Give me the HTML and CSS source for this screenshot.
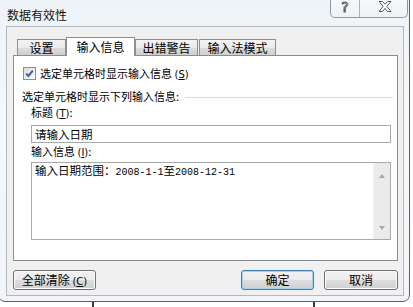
FILE: index.html
```html
<!DOCTYPE html>
<html lang="zh-CN">
<head>
<meta charset="utf-8">
<title>数据有效性</title>
<link rel="stylesheet" href="styles.css">
</head>
<body>
<div class="win">
  <div class="titlebar">
    <span class="title">数据有效性</span>
    <div class="caps">
      <span class="cap help">?</span>
      <span class="cap close">
        <svg width="14" height="11" viewBox="0 0 14 11"><polygon points="1,0.5 4.5,0.5 7,3.2 9.5,0.5 13,0.5 8.8,5.3 13,10.5 9.5,10.5 7,7.4 4.5,10.5 1,10.5 5.2,5.3" fill="#fff" stroke="#5a5a5a" stroke-width="1" stroke-linejoin="round"/></svg>
      </span>
    </div>
  </div>
  <div class="client">
    <div class="tabs">
      <div class="tab t1">设置</div>
      <div class="tab t2 active">输入信息</div>
      <div class="tab t3">出错警告</div>
      <div class="tab t4">输入法模式</div>
    </div>
    <div class="panel">
      <div class="check-row">
        <span class="box"><svg width="11" height="11" viewBox="0 0 11 11"><path d="M2.2 5.6 L4.4 8 L8.8 2.6" fill="none" stroke="#3b5f97" stroke-width="2"/></svg></span>
        <span class="lbl">选定单元格时显示输入信息 <span class="acc">(<u>S</u>)</span></span>
      </div>
      <div class="group-row">
        <span class="lbl">选定单元格时显示下列输入信息:</span>
        <span class="rule"></span>
      </div>
      <div class="field-lbl">标题 <span class="acc">(<u>T</u>)</span>:</div>
      <div class="input">请输入日期</div>
      <div class="field-lbl">输入信息 <span class="acc">(<u>I</u>)</span>:</div>
      <div class="textarea">
        <div class="ta-text">输入日期范围：<span class="mono">2008-1-1</span>至<span class="mono">2008-12-31</span></div>
        <div class="scroll">
          <span class="arrow up"></span>
          <span class="arrow down"></span>
        </div>
      </div>
    </div>
    <div class="buttons">
      <div class="btn clear">全部清除 <span class="acc">(<u>C</u>)</span></div>
      <div class="spacer"></div>
      <div class="btn ok">确定</div>
      <div class="btn cancel">取消</div>
    </div>
  </div>
</div>
<div class="below"></div>
</body>
</html>
```
FILE: styles.css
```css
* { box-sizing: border-box; }
html, body { margin: 0; padding: 0; }
body {
  width: 413px;
  height: 307px;
  overflow: hidden;
  background: #fff;
  display: flex;
  flex-direction: column;
  font-family: "Noto Sans CJK SC", "Noto Sans", sans-serif;
  color: #000;
}
.win {
  flex: none;
  width: 412px;
  height: 304px;
  margin: -2px 0 0 -2px;
  border: 1px solid #5a6068;
  border-radius: 0 0 7px 7px;
  background: linear-gradient(180deg, #eef3f8 0%, #f6f9fb 40%, #f1f5f9 100%);
  display: flex;
  flex-direction: column;
}
.titlebar {
  height: 27px;
  display: flex;
  justify-content: space-between;
  align-items: flex-start;
}
.title {
  padding: 9px 0 0 8px;
  font-size: 12px;
  line-height: 13px;
  color: #111;
}
.caps {
  display: flex;
  width: 78px;
  height: 20px;
  margin-right: 1px;
  margin-top: -1px;
  border: 1px solid #8e98a4;
  border-top: none;
  border-radius: 0 0 5px 5px;
  background: linear-gradient(180deg, #f7f9fb, #eef2f6);
}
.cap {
  display: flex;
  align-items: center;
  justify-content: center;
  height: 100%;
}
.help {
  width: 29px;
  border-right: 1px solid #a9b2bc;
  font-family: "DejaVu Sans", sans-serif;
  font-size: 14px;
  color: #fff;
  -webkit-text-stroke: 0.9px #555;
  padding-bottom: 2px;
}
.close { flex: 1; padding-bottom: 2px; padding-left: 2px; }
.client {
  height: 270px;
  margin: 0 5px 0 7px;
  border: 1px solid #b3b8bf;
  background: #f0f0f0;
  padding: 0 5px 0 6px;
  display: flex;
  flex-direction: column;
}
.tabs {
  height: 28px;
  display: flex;
  align-items: flex-end;
  padding-left: 4px;
}
.tab {
  height: 16px;
  border: 1px solid #8c8e94;
  border-bottom: none;
  background: linear-gradient(180deg, #f3f3f3 0%, #ebebeb 50%, #dddddd 51%, #cfcfcf 100%);
  font-size: 12px;
  line-height: 15px;
  text-align: center;
  color: #000;
}
.t1 { width: 49px; }
.t2 { width: 69px; }
.t3 { width: 63px; }
.t4 { width: 77px; margin-left: 1px; }
.tab.active {
  height: 19px;
  margin-bottom: -1px;
  position: relative;
  z-index: 1;
  background: #fff;
  line-height: 17px;
}
.panel {
  height: 206px;
  border: 1px solid #898c95;
  background: #fff;
  display: flex;
  flex-direction: column;
}
.check-row {
  margin-top: 11px;
  padding-left: 9px;
  height: 13px;
  display: flex;
  align-items: center;
}
.box {
  width: 13px;
  height: 13px;
  border: 1px solid #8e8f8f;
  background: linear-gradient(135deg, #dcdcdc, #fbfbfb);
  display: flex;
  align-items: center;
  justify-content: center;
  flex: none;
}
.lbl, .field-lbl {
  font-size: 11px;
  line-height: 13px;
  white-space: nowrap;
}
.check-row .lbl { margin-left: 4px; }
.acc { font-family: "DejaVu Sans", sans-serif; font-size: 10px; }
.group-row {
  margin-top: 10px;
  padding: 0 4px 0 8px;
  display: flex;
  align-items: center;
}
.rule {
  flex: 1;
  margin-left: 6px;
  margin-top: 2px;
  border-top: 1px solid #d6dbe0;
}
.field-lbl { padding-left: 17px; }
.panel .field-lbl { margin-top: 3px; }
.input {
  margin: 5px 6px 0 17px;
  height: 18px;
  border: 1px solid #a7a9ad;
  font-size: 11.5px;
  line-height: 16px;
  padding-left: 3px;
}
.panel .input + .field-lbl { margin-top: 2px; }
.textarea {
  margin: 3px 6px 0 17px;
  height: 78px;
  border: 1px solid #a7a9ad;
  display: flex;
}
.ta-text {
  flex: 1;
  padding: 1px 0 0 3px;
  font-size: 11.5px;
  line-height: 13px;
  white-space: nowrap;
}
.mono { font-family: "Liberation Mono", monospace; font-size: 10px; }
.scroll {
  width: 17px;
  background: #ebebeb;
  border-left: 1px solid #f4f4f4;
  display: flex;
  flex-direction: column;
  justify-content: space-between;
  align-items: center;
  padding: 11px 0 9px;
}
.arrow { width: 0; height: 0; border-left: 3.5px solid transparent; border-right: 3.5px solid transparent; }
.arrow.up { border-bottom: 4px solid #a8a8a8; }
.arrow.down { border-top: 4px solid #a8a8a8; }
.buttons {
  margin-top: 9px;
  height: 20px;
  display: flex;
}
.spacer { flex: 1; }
.btn {
  height: 20px;
  border: 1px solid #707070;
  border-radius: 3px;
  background: linear-gradient(180deg, #f2f2f2 0%, #ebebeb 48%, #dddddd 52%, #cfcfcf 100%);
  box-shadow: inset 0 0 0 1px #fcfcfc;
  font-size: 12px;
  line-height: 18px;
  text-align: center;
  white-space: nowrap;
}
.clear { width: 83px; }
.ok {
  width: 73px;
  border-color: #3c7fb1;
  box-shadow: inset 0 0 0 1px #9fd3ef;
}
.cancel { width: 74px; margin-left: 10px; }
.below {
  flex: none;
  height: 5px;
  background:
    linear-gradient(90deg, transparent 92px, #3a3a3a 92px, #3a3a3a 94px, transparent 94px),
    linear-gradient(90deg, transparent 313px, #3a3a3a 313px, #3a3a3a 315px, transparent 315px),
    #fff;
}
```
